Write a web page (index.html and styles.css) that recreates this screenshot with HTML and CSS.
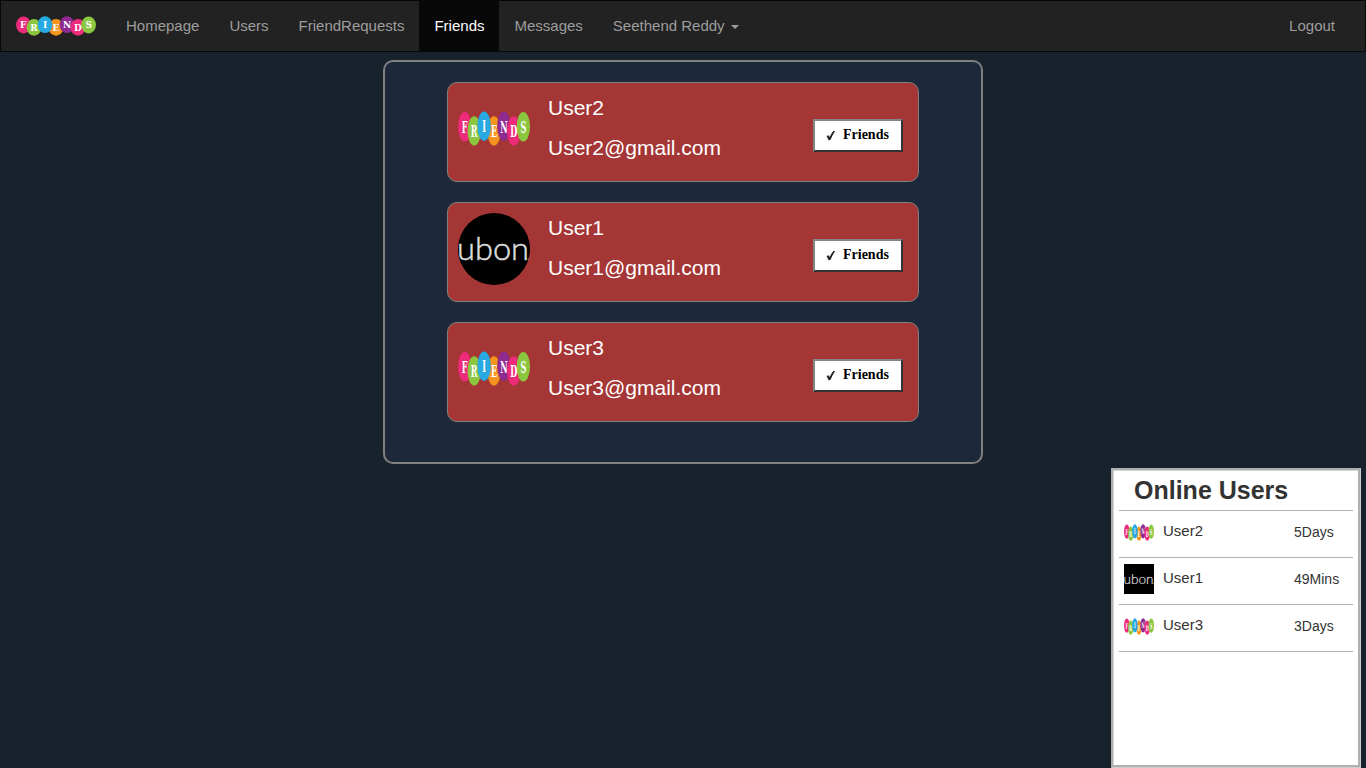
FILE: index.html
```html
<!DOCTYPE html>
<html lang="en">
<head>
<meta charset="utf-8">
<title>Friends</title>
<link rel="stylesheet" href="styles.css">
</head>
<body>
<nav class="navbar">
  <a class="brand">
    <svg class="brand-logo" viewBox="0 0 80 20" preserveAspectRatio="none">
      <g id="logo">
        <ellipse cx="7.5" cy="9" rx="7.4" ry="8.4" fill="#ee2a7b"/>
        <ellipse cx="18" cy="11.4" rx="7.4" ry="8.4" fill="#8cc63f"/>
        <ellipse cx="40" cy="11.4" rx="7.4" ry="8.4" fill="#f7941e"/>
        <ellipse cx="29" cy="8.7" rx="7.4" ry="8.4" fill="#27aae1"/>
        <ellipse cx="51" cy="8.7" rx="7.4" ry="8.4" fill="#8e2a90"/>
        <ellipse cx="62" cy="11.4" rx="7.4" ry="8.4" fill="#ee2a7b"/>
        <ellipse cx="72.6" cy="9" rx="7.4" ry="8.4" fill="#8cc63f"/>
        <g class="logo-letters">
          <text x="7.3" y="12.4">F</text><text x="18" y="15">R</text><text x="29" y="12.1">I</text><text x="40" y="15">E</text><text x="51" y="12.3">N</text><text x="62" y="15">D</text><text x="72.8" y="12.4">S</text>
        </g>
      </g>
    </svg>
  </a>
  <a class="nav-link">Homepage</a>
  <a class="nav-link">Users</a>
  <a class="nav-link">FriendRequests</a>
  <a class="nav-link active">Friends</a>
  <a class="nav-link">Messages</a>
  <a class="nav-link">Seethend Reddy <span class="caret"></span></a>
  <a class="nav-link logout">Logout</a>
</nav>

<main class="panel">
  <article class="card">
    <div class="avatar"><svg class="avatar-logo" viewBox="0 0 80 20" preserveAspectRatio="none"><use href="#logo"/></svg></div>
    <div class="info"><p>User2</p><p>User2@gmail.com</p></div>
    <button class="friend-btn"><svg class="check" viewBox="0 0 10 11"><path id="check" d="M.6 5.9 2.5 5.2 3.6 7C4.9 4.3 6.2 2.2 7.6 .9L9.2 1C7.3 3.8 5.8 6.7 4.6 9.8L2.6 10.3Z"/></svg>Friends</button>
  </article>
  <article class="card">
    <div class="avatar">
      <svg class="avatar-ubon" viewBox="0 0 72 72">
        <g id="ubon">
          <rect width="72" height="72" fill="#000"/>
          <text class="ubon-text" x="-1" y="47" textLength="72" lengthAdjust="spacingAndGlyphs">ubon</text>
          <rect x="69.8" y="45.5" width="1.5" height="1.5" fill="#bbb"/>
        </g>
      </svg>
    </div>
    <div class="info"><p>User1</p><p>User1@gmail.com</p></div>
    <button class="friend-btn"><svg class="check" viewBox="0 0 10 11"><use href="#check"/></svg>Friends</button>
  </article>
  <article class="card">
    <div class="avatar"><svg class="avatar-logo" viewBox="0 0 80 20" preserveAspectRatio="none"><use href="#logo"/></svg></div>
    <div class="info"><p>User3</p><p>User3@gmail.com</p></div>
    <button class="friend-btn"><svg class="check" viewBox="0 0 10 11"><use href="#check"/></svg>Friends</button>
  </article>
</main>

<aside class="online">
  <h2 class="online-title">Online Users</h2>
  <div class="online-row"><div class="thumb"><svg class="thumb-logo" viewBox="0 0 80 20" preserveAspectRatio="none"><use href="#logo"/></svg></div><span class="name">User2</span><span class="time">5Days</span></div>
  <div class="online-row"><div class="thumb"><svg class="thumb-ubon" viewBox="0 0 72 72"><use href="#ubon"/></svg></div><span class="name">User1</span><span class="time">49Mins</span></div>
  <div class="online-row"><div class="thumb"><svg class="thumb-logo" viewBox="0 0 80 20" preserveAspectRatio="none"><use href="#logo"/></svg></div><span class="name">User3</span><span class="time">3Days</span></div>
</aside>
</body>
</html>
```
FILE: styles.css
```css
* { box-sizing: border-box; }
body {
  margin: 0;
  height: 768px;
  overflow: hidden;
  background: #18222c;
  font-family: "Liberation Sans", Arial, sans-serif;
  color: #333;
}
svg { display: block; }
.logo-letters {
  fill: #fff;
  font: bold 9px "DejaVu Serif", serif;
  text-anchor: middle;
}
.ubon-text {
  fill: #ddd;
  stroke: #ddd;
  stroke-width: .5px;
  font: 300 31px Lato, sans-serif;
}

.navbar {
  display: flex;
  height: 52px;
  padding-right: 15px;
  background: #222;
  border: 1px solid #080808;
}
.brand { padding: 15px 15px 0; }
.brand-logo { width: 80px; height: 20px; }
.nav-link {
  padding: 15px;
  font-size: 15px;
  line-height: 20px;
  color: #9d9d9d;
  white-space: nowrap;
}
.nav-link.active { background: #080808; color: #fff; }
.logout { margin-left: auto; }
.caret {
  display: inline-block;
  margin-left: 2px;
  vertical-align: middle;
  border-top: 4px solid;
  border-left: 4px solid transparent;
  border-right: 4px solid transparent;
}

.panel {
  display: flex;
  flex-direction: column;
  gap: 20px;
  width: 600px;
  height: 404px;
  margin: 8px auto 0;
  padding: 20px 62px;
  background: #1d293a;
  border: 2px solid gray;
  border-radius: 10px;
}
.card {
  display: flex;
  height: 100px;
  padding: 0 15px 0 10px;
  background: #a43636;
  border: 1px solid gray;
  border-radius: 10px;
}
.avatar {
  display: flex;
  width: 72px;
  height: 72px;
  margin-top: 10px;
}
.avatar-logo { width: 72px; height: 35px; margin-top: 18px; }
.avatar-ubon { width: 72px; height: 72px; border-radius: 50%; }
.info { margin-left: 18px; padding-top: 10px; }
.info p {
  margin: 0 0 10px;
  font-size: 21px;
  line-height: 30px;
  color: #fff;
}
.friend-btn {
  display: flex;
  align-items: center;
  width: 90px;
  height: 33px;
  margin: 36px 0 0 auto;
  padding: 0 0 1px 11px;
  background: #fff;
  border: 2px solid;
  border-color: #858585 #333 #333 #858585;
  font: bold 14px "Liberation Serif", serif;
  color: #000;
}
.check { width: 10px; height: 11px; margin: 0 7px 0 0; fill: #222; }

.online {
  position: absolute;
  left: 1111px;
  top: 468px;
  width: 250px;
  height: 300px;
  padding: 1px 7px 0 6px;
  background: #fff;
  border: solid;
  border-width: 2px 1px 1px 2px;
  border-color: #b0b0b0 #cfcfcf #cfcfcf #b0b0b0;
  box-shadow: inset -2px -2px 0 #b0b0b0, inset 1px 1px 0 #d4d4d4;
}
.online-title {
  height: 40px;
  margin: 0;
  padding-left: 15px;
  border-bottom: 1px solid #b0b0b0;
  font-size: 25px;
  line-height: 38px;
}
.online-row {
  display: flex;
  height: 47px;
  padding: 6px 0 0 5px;
  border-bottom: 1px solid #b0b0b0;
  font-size: 15px;
  line-height: 28px;
}
.thumb { width: 30px; height: 30px; }
.thumb-logo { width: 30px; height: 17px; margin-top: 7px; }
.thumb-ubon { width: 30px; height: 30px; }
.name { width: 131px; margin-left: 9px; }
.time { font-size: 14px; line-height: 30px; }
```
